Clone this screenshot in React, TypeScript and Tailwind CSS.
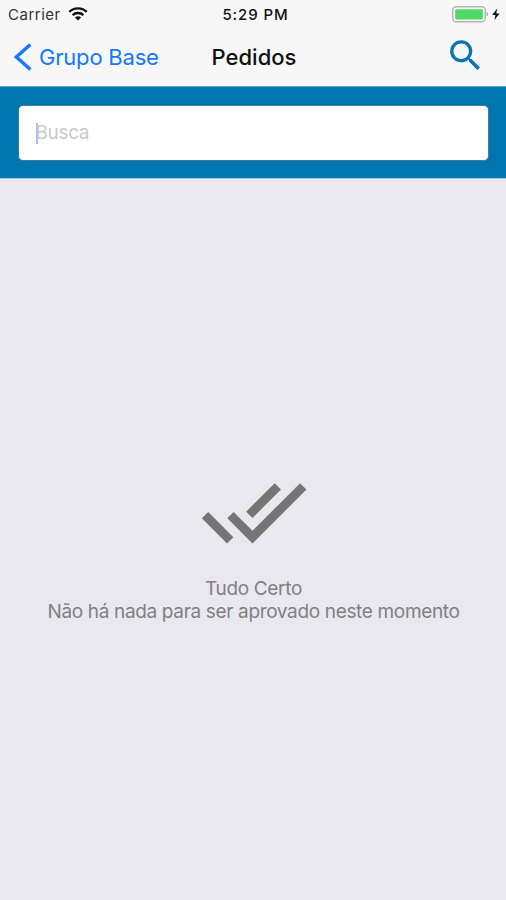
const WifiIcon = () => (
  <svg className="h-[14px] w-[20px]" viewBox="0 0 20 14" fill="none" stroke="#111111">
    <path d="M1.3 4.9C6 0.3 14 0.3 18.7 4.9" strokeWidth="2.3" />
    <path d="M4.6 8.1C7.5 5.3 12.5 5.3 15.4 8.1" strokeWidth="2.3" />
    <path d="M10 13.4L6.9 10.4C8.6 8.9 11.4 8.9 13.1 10.4L10 13.4Z" fill="#111111" stroke="none" />
  </svg>
);

const BatteryIcon = () => (
  <svg className="h-[17px] w-[50px]" viewBox="0 0 50 17">
    <rect x="0.8" y="0.8" width="32.4" height="15" rx="3.5" fill="#ffffff" stroke="#b4b4b4" strokeWidth="1.4" />
    <rect x="3.2" y="3.2" width="27.6" height="10.2" rx="1" fill="#4cd964" />
    <path d="M34.5 6.1C36.8 6.6 36.8 10 34.5 10.5Z" fill="#a9a9a9" />
    <path d="M45.2 2.5L40.2 8.9H43.4L42.4 14L47.6 7.4H44.3L45.2 2.5Z" fill="#111111" />
  </svg>
);

const StatusBar = () => (
  <div className="grid h-7 grid-cols-3 items-center pl-2 pr-1 text-[15px] text-[#333333]">
    <div className="flex items-center gap-[7px]">
      <span className="pt-[2px] tracking-[0.5px]">Carrier</span>
      <WifiIcon />
    </div>
    <span className="pl-px pt-[2px] text-center text-[15px] font-medium tracking-[0.9px] text-[#111111]">5:29 PM</span>
    <div className="flex justify-end">
      <BatteryIcon />
    </div>
  </div>
);

const NavBar = () => (
  <header className="grid h-[58px] grid-cols-3 items-center">
    <button className="flex items-center gap-[7px] whitespace-nowrap pl-[14px] text-[22px] leading-[30px] tracking-[-0.2px] text-[#1677ff]">
      <svg className="h-[28px] w-[18px] shrink-0" viewBox="0 0 18 28" fill="none" stroke="#1677ff" strokeWidth="3.4">
        <path d="M16.4 1.6L2.4 14L16.4 26.4" />
      </svg>
      Grupo Base
    </button>
    <h1 className="pl-[2px] text-center text-[22px] font-medium leading-[30px] text-[#111111]">Pedidos</h1>
    <button className="flex justify-end pb-[3px] pr-[20px]" aria-label="Buscar">
      <svg className="h-[41px] w-[41px]" viewBox="0 0 24 24" fill="#0a75b0">
        <path d="M15.5 14h-.79l-.28-.27A6.471 6.471 0 0 0 16 9.5 6.5 6.5 0 1 0 9.5 16c1.61 0 3.09-.59 4.23-1.57l.27.28v.79l5 4.99L20.49 19l-4.99-5zm-6 0C7.01 14 5 11.99 5 9.5S7.01 5 9.5 5 14 7.01 14 9.5 11.99 14 9.5 14z" />
      </svg>
    </button>
  </header>
);

const SearchBar = () => (
  <div className="h-[93px] border-b border-[#a9cbe0] border-t border-t-[#5fa6cb] bg-[#0076b0] pl-[18px] pr-[17px] pt-[18px]">
    <div className="flex h-[56px] items-center rounded-[5px] border border-[#47789b] bg-white pl-[17px]">
      <span className="h-[21px] w-[1.5px] bg-[#b3b8f2]" />
      <span className="-ml-[2px] text-[19px] leading-6 tracking-[-0.35px] text-[#cacacd]">Busca</span>
    </div>
  </div>
);

const EmptyState = () => (
  <main className="flex flex-1 flex-col items-center pl-px pt-[279px] text-center text-[19px] leading-[23px] tracking-[-0.34px] text-[#808083]">
    <svg className="h-[108px] w-[108px]" viewBox="0 0 24 24" fill="#757575">
      <path d="M18 7l-1.41-1.41-6.34 6.34 1.41 1.41L18 7zm4.24-1.41L11.66 16.17 7.48 12l-1.41 1.41L11.66 19l12-12-1.42-1.41zM.41 13.41L6 19l1.41-1.41L1.83 12 .41 13.41z" />
    </svg>
    <p className="mt-[11px]">Tudo Certo</p>
    <p className="whitespace-nowrap">Não há nada para ser aprovado neste momento</p>
  </main>
);

export default function App() {
  return (
    <div className="flex h-[900px] w-[506px] flex-col overflow-hidden bg-[#e9e8ef] font-['Inter',sans-serif]">
      <div className="bg-[#f7f7f7]">
        <StatusBar />
        <NavBar />
      </div>
      <SearchBar />
      <EmptyState />
    </div>
  );
}
